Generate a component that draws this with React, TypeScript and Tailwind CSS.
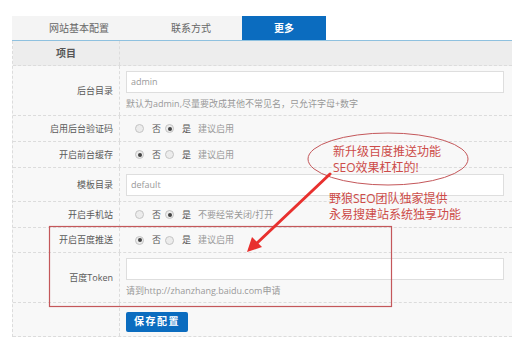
import React from 'react';

const cjk = { fontFamily: '"Open Sans", "Noto Sans CJK SC", sans-serif' };

const Radio = ({ checked }: { checked?: boolean }) => (
  <span className="flex h-[9px] w-[9px] items-center justify-center rounded-full border border-[#c4c4c4] bg-[#ececec]">
    {checked && <span className="h-[4px] w-[4px] rounded-full bg-[#444]" />}
  </span>
);

const RadioRow = ({ yes, note }: { yes: boolean; note: string }) => (
  <div className="flex items-center pl-[9px] text-[9px]">
    <Radio checked={!yes} />
    <span className="ml-[8px] text-[#555]">否</span>
    <span className="ml-[4px]">
      <Radio checked={yes} />
    </span>
    <span className="ml-[8px] text-[#555]">是</span>
    <span className="ml-[7px] text-[#999]">{note}</span>
  </div>
);

const Row = ({ label, h, children }: { label: string; h: string; children?: React.ReactNode }) => (
  <div className={`flex border-b border-dashed border-[#dcdcdc] ${h}`}>
    <div className="flex w-[107px] shrink-0 items-center justify-end border-r border-dashed border-[#dcdcdc] pr-[6px] text-[9px] text-[#5a5a5a]">
      {label}
    </div>
    <div className="flex flex-1 flex-col justify-center pl-[6px] pr-[8px]">{children}</div>
  </div>
);

const Input = ({ value }: { value?: string }) => (
  <div className="flex h-[22px] items-center border border-[#dedede] bg-white pl-[4px] text-[9px] text-[#999]">
    {value}
  </div>
);

export default function App() {
  return (
    <div className="relative h-[364px] w-[512px] overflow-hidden bg-white" style={cjk}>
      <div className="pl-[12px] pt-[16px]">
        {/* tabs */}
        <div className="flex h-[25px] border-b border-[#8fc1df]">
          <div className="flex bg-[#f4f4f4] pl-[6px]">
            <div className="flex items-center px-[31px] text-[10px] text-[#666]">网站基本配置</div>
            <div className="flex items-center px-[31px] text-[10px] text-[#666]">联系方式</div>
          </div>
          <div className="flex items-center bg-[#0b6cbf] px-[32px] text-[10px] font-bold text-white">更多</div>
        </div>

        {/* table */}
        <div className="border-l border-dashed border-[#dcdcdc] bg-[#f8f8f8]">
          <div className="flex h-[25px] border-b border-dashed border-[#dcdcdc] bg-[#ededed]">
            <div className="flex w-[107px] items-center justify-center border-r border-dashed border-[#dcdcdc] text-[10px] font-bold text-[#555]">
              项目
            </div>
            <div className="flex-1" />
          </div>

          <Row label="后台目录" h="h-[50px]">
            <Input value="admin" />
            <div className="mt-[4px] text-[9px] text-[#999]">默认为admin,尽量要改成其他不常见名，只允许字母+数字</div>
          </Row>
          <Row label="启用后台验证码" h="h-[26px]">
            <RadioRow yes note="建议启用" />
          </Row>
          <Row label="开启前台缓存" h="h-[26px]">
            <RadioRow yes={false} note="建议启用" />
          </Row>
          <Row label="模板目录" h="h-[34px]">
            <Input value="default" />
          </Row>
          <Row label="开启手机站" h="h-[26px]">
            <RadioRow yes note="不要经常关闭/打开" />
          </Row>
          <Row label="开启百度推送" h="h-[25px]">
            <RadioRow yes={false} note="建议启用" />
          </Row>
          <Row label="百度Token" h="h-[50px]">
            <Input />
            <div className="mt-[4px] text-[9px] text-[#999]">请到http://zhanzhang.baidu.com申请</div>
          </Row>
          <Row label="" h="h-[34px]">
            <div>
              <button className="h-[20px] w-[62px] rounded-[2px] bg-[#0b6cbf] text-[10px] font-bold tracking-[1.5px] text-white">
                保存配置
              </button>
            </div>
          </Row>
        </div>
      </div>

      {/* annotations */}
      <svg className="pointer-events-none absolute inset-0" width="512" height="364">
        <rect x="49.5" y="226.5" width="342" height="80" fill="none" stroke="#c4575a" strokeWidth="1.2" />
        <ellipse cx="388" cy="159" rx="80" ry="26" fill="none" stroke="#c4575a" strokeWidth="1" />
        <line x1="330" y1="174" x2="256" y2="244" stroke="#e8302e" strokeWidth="3" strokeLinecap="round" />
        <polygon points="247,252 252,237 262,247" fill="#e8302e" />
      </svg>
      <div className="absolute left-[333px] top-[144px] text-[12px] leading-[16px] text-[#cd4b48]">
        <div>新升级百度推送功能</div>
        <div>SEO效果杠杠的!</div>
      </div>
      <div className="absolute left-[329px] top-[191px] text-[12px] leading-[16px] text-[#cd4b48]">
        <div>野狼SEO团队独家提供</div>
        <div>永易搜建站系统独享功能</div>
      </div>
    </div>
  );
}
